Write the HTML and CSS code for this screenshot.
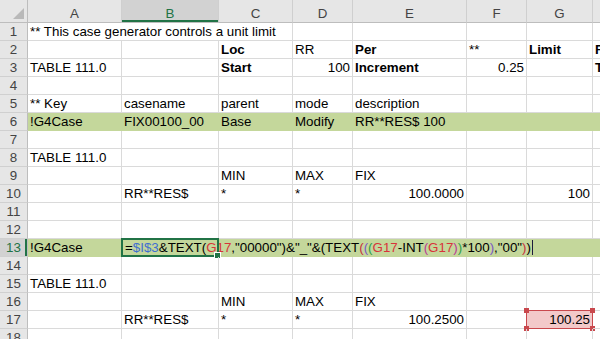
FILE: index.html
```html
<!DOCTYPE html>
<html lang="en">
<head>
    <meta charset="UTF-8">
    <meta name="viewport" content="width=device-width, initial-scale=1.0">
    <title>Case Generator</title>
    <link rel="stylesheet" href="styles.css">
</head>
<body>
    <div class="sheet">
        <!-- Column headers -->
        <div class="row head">
            <div class="corner"><span class="tri"></span></div>
            <div class="col">A</div>
            <div class="col active">B</div>
            <div class="col">C</div>
            <div class="col">D</div>
            <div class="col">E</div>
            <div class="col">F</div>
            <div class="col">G</div>
            <div class="col">H</div>
        </div>

        <div class="row">
            <div class="num">1</div>
            <div class="cell span3">** This case generator controls a unit limit</div>
            <div class="cell"></div><div class="cell"></div><div class="cell"></div><div class="cell"></div><div class="cell"></div>
        </div>
        <div class="row">
            <div class="num">2</div>
            <div class="cell"></div>
            <div class="cell"></div>
            <div class="cell bold">Loc</div>
            <div class="cell">RR</div>
            <div class="cell bold">Per</div>
            <div class="cell">**</div>
            <div class="cell bold">Limit</div>
            <div class="cell bold">Fmt</div>
        </div>
        <div class="row">
            <div class="num">3</div>
            <div class="cell">TABLE 111.0</div>
            <div class="cell"></div>
            <div class="cell bold">Start</div>
            <div class="cell right">100</div>
            <div class="cell bold">Increment</div>
            <div class="cell right">0.25</div>
            <div class="cell"></div>
            <div class="cell bold">Text</div>
        </div>
        <div class="row">
            <div class="num">4</div>
            <div class="cell"></div><div class="cell"></div><div class="cell"></div><div class="cell"></div>
            <div class="cell"></div><div class="cell"></div><div class="cell"></div><div class="cell"></div>
        </div>
        <div class="row">
            <div class="num">5</div>
            <div class="cell">** Key</div>
            <div class="cell">casename</div>
            <div class="cell">parent</div>
            <div class="cell">mode</div>
            <div class="cell">description</div>
            <div class="cell"></div><div class="cell"></div><div class="cell"></div>
        </div>
        <div class="row fill">
            <div class="num">6</div>
            <div class="cell">!G4Case</div>
            <div class="cell">FIX00100_00</div>
            <div class="cell">Base</div>
            <div class="cell">Modify</div>
            <div class="cell">RR**RES$ 100</div>
            <div class="cell"></div><div class="cell"></div><div class="cell"></div>
        </div>
        <div class="row">
            <div class="num">7</div>
            <div class="cell"></div><div class="cell"></div><div class="cell"></div><div class="cell"></div>
            <div class="cell"></div><div class="cell"></div><div class="cell"></div><div class="cell"></div>
        </div>
        <div class="row">
            <div class="num">8</div>
            <div class="cell">TABLE 111.0</div>
            <div class="cell"></div><div class="cell"></div><div class="cell"></div>
            <div class="cell"></div><div class="cell"></div><div class="cell"></div><div class="cell"></div>
        </div>
        <div class="row">
            <div class="num">9</div>
            <div class="cell"></div>
            <div class="cell"></div>
            <div class="cell">MIN</div>
            <div class="cell">MAX</div>
            <div class="cell">FIX</div>
            <div class="cell"></div><div class="cell"></div><div class="cell"></div>
        </div>
        <div class="row">
            <div class="num">10</div>
            <div class="cell"></div>
            <div class="cell">RR**RES$</div>
            <div class="cell">*</div>
            <div class="cell">*</div>
            <div class="cell right">100.0000</div>
            <div class="cell"></div>
            <div class="cell right">100</div>
            <div class="cell"></div>
        </div>
        <div class="row">
            <div class="num">11</div>
            <div class="cell"></div><div class="cell"></div><div class="cell"></div><div class="cell"></div>
            <div class="cell"></div><div class="cell"></div><div class="cell"></div><div class="cell"></div>
        </div>
        <div class="row">
            <div class="num">12</div>
            <div class="cell"></div><div class="cell"></div><div class="cell"></div><div class="cell"></div>
            <div class="cell"></div><div class="cell"></div><div class="cell"></div><div class="cell"></div>
        </div>
        <div class="row fill">
            <div class="num selected">13</div>
            <div class="cell">!G4Case</div>
            <div class="cell editing">=<span class="ref-blue">$I$3</span>&amp;TEXT(<span class="ref-red">G17</span>,"00000")&amp;"_"&amp;(TEXT<span class="p2">(</span><span class="p3">(</span><span class="p4">(</span><span class="ref-red">G17</span>-INT<span class="p5">(</span><span class="ref-red">G17</span><span class="p5">)</span><span class="p4">)</span>*100<span class="p3">)</span>,"00"<span class="p2">)</span>)<span class="caret"></span>
                <span class="active-box"><span class="handle"></span></span>
            </div>
        </div>
        <div class="row">
            <div class="num">14</div>
            <div class="cell"></div><div class="cell"></div><div class="cell"></div><div class="cell"></div>
            <div class="cell"></div><div class="cell"></div><div class="cell"></div><div class="cell"></div>
        </div>
        <div class="row">
            <div class="num">15</div>
            <div class="cell">TABLE 111.0</div>
            <div class="cell"></div><div class="cell"></div><div class="cell"></div>
            <div class="cell"></div><div class="cell"></div><div class="cell"></div><div class="cell"></div>
        </div>
        <div class="row">
            <div class="num">16</div>
            <div class="cell"></div>
            <div class="cell"></div>
            <div class="cell">MIN</div>
            <div class="cell">MAX</div>
            <div class="cell">FIX</div>
            <div class="cell"></div><div class="cell"></div><div class="cell"></div>
        </div>
        <div class="row">
            <div class="num">17</div>
            <div class="cell"></div>
            <div class="cell">RR**RES$</div>
            <div class="cell">*</div>
            <div class="cell">*</div>
            <div class="cell right">100.2500</div>
            <div class="cell"></div>
            <div class="cell right picked">100.25
                <span class="pick-box">
                    <span class="dot tl"></span><span class="dot tr"></span>
                    <span class="dot bl"></span><span class="dot br"></span>
                </span>
            </div>
            <div class="cell"></div>
        </div>
        <div class="row">
            <div class="num">18</div>
            <div class="cell"></div><div class="cell"></div><div class="cell"></div><div class="cell"></div>
            <div class="cell"></div><div class="cell"></div><div class="cell"></div><div class="cell"></div>
        </div>
    </div>
</body>
</html>
```

FILE: styles.css
```css
body {
    margin: 0;
    background: #fff;
    font-family: 'Liberation Sans', Arial, sans-serif;
    font-size: 10pt;
    color: #000;
    overflow: hidden;
}
.sheet {
    width: 600px;
    height: 339px;
    overflow: hidden;
}
/* column H runs past the window edge, as in the real grid */
.row {
    display: grid;
    grid-template-columns: 28px 94px 97px 74px 60px 114px 60px 66px 66px;
    width: 659px;
    height: 18px;
}
.row.head {
    height: 23px;
}
/* Column headers */
.corner, .col {
    background: #e6e6e6;
    border-right: 1px solid #cfcfcf;
    border-bottom: 1px solid #bdbdbd;
    box-sizing: border-box;
}
.corner {
    position: relative;
    border-right-color: #bdbdbd;
}
.tri {
    position: absolute;
    right: 3px;
    bottom: 3px;
    width: 0;
    height: 0;
    border-left: 11px solid transparent;
    border-bottom: 11px solid #b9b9b9;
}
.col {
    color: #444;
    text-align: center;
    line-height: 17px;
    padding-top: 5px;
}
.col.active {
    background: #d2d2d2;
    color: #217346;
    box-shadow: inset 0 -2px 0 #217346;
}
/* Row numbers */
.num {
    background: #e6e6e6;
    color: #444;
    text-align: center;
    line-height: 17px;
    border-right: 1px solid #bdbdbd;
    border-bottom: 1px solid #d0d0d0;
    box-sizing: border-box;
}
.num.selected {
    background: #d2d2d2;
    color: #217346;
    box-shadow: inset -2px 0 0 #217346;
}
/* Cells */
.cell {
    position: relative;
    box-sizing: border-box;
    border-right: 1px solid #dadada;
    border-bottom: 1px solid #dadada;
    padding: 0 2px;
    line-height: 17px;
    white-space: nowrap;
}
.span3 {
    grid-column: span 3;
}
.bold {
    font-weight: bold;
}
.right {
    text-align: right;
}
.fill .cell {
    background: #c4d79b;
    border-color: #c4d79b;
}
/* Formula being edited in B13 */
.editing {
    grid-column: span 7;
    padding-left: 3px;
}
.ref-blue { color: #3f6fd0; }
.ref-red { color: #d8333a; }
.p2 { color: #c8303c; }
.p3 { color: #7a58c4; }
.p4 { color: #2f9e48; }
.p5 { color: #b83a96; }
.caret {
    display: inline-block;
    width: 1px;
    height: 15px;
    margin-left: 1px;
    vertical-align: -3px;
    background: #1c1c3c;
}
.active-box {
    position: absolute;
    left: -1px;
    top: -1px;
    width: 98px;
    height: 19px;
    box-sizing: border-box;
    border: 2px solid #217346;
}
.handle {
    position: absolute;
    right: -4px;
    bottom: -4px;
    width: 5px;
    height: 5px;
    background: #217346;
    border: 1px solid #fff;
}
/* Referenced cell G17 */
.picked {
    background: #f3c9c9;
}
.pick-box {
    position: absolute;
    left: -1px;
    top: -1px;
    right: -1px;
    bottom: -1px;
    border: 1px solid #c9484d;
}
.dot {
    position: absolute;
    width: 5px;
    height: 5px;
    background: #c9484d;
}
.dot.tl { left: -3px; top: -3px; }
.dot.tr { right: -3px; top: -3px; }
.dot.bl { left: -3px; bottom: -3px; }
.dot.br { right: -3px; bottom: -3px; }
```
